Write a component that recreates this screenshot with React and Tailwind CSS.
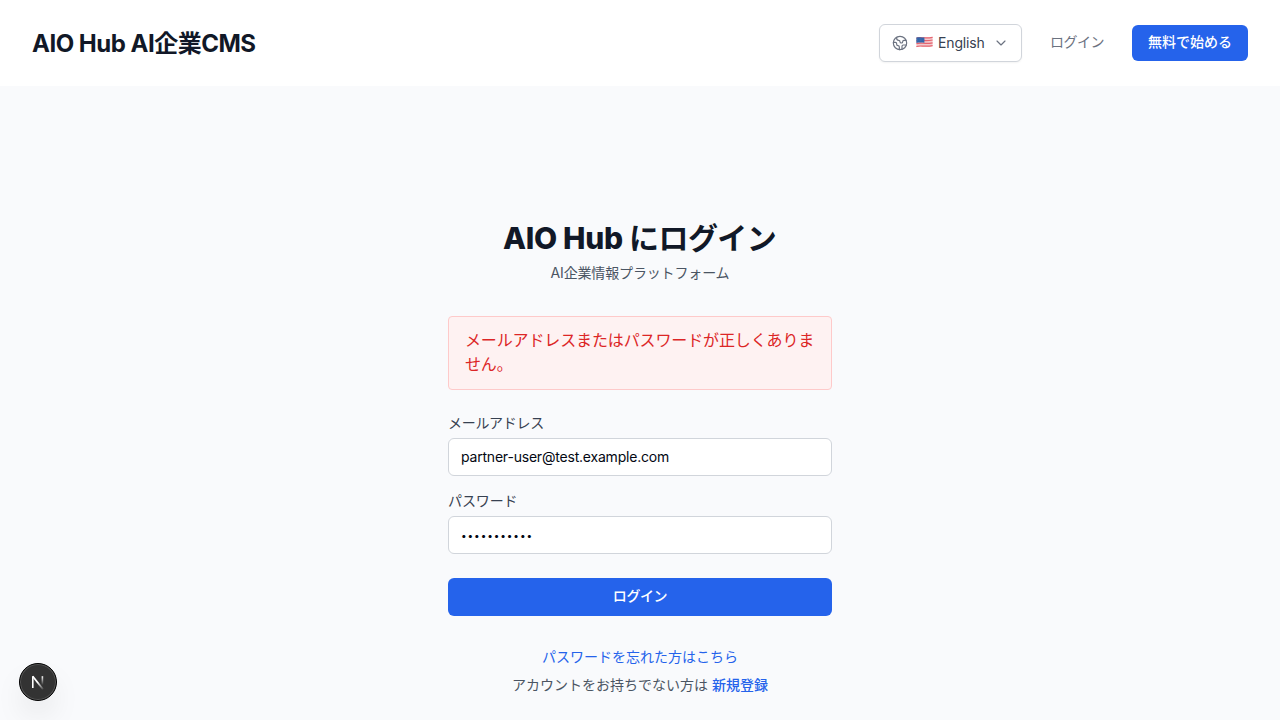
import React from 'react';
import { ChevronDown, Earth } from 'lucide-react';

function Flag() {
  return (
    <svg className="block h-3 w-[17px]" viewBox="0 0 17 12" aria-hidden="true">
      <path d="M.4 1.6C4 .2 9 2.2 16.6.7v9.3C11 12 7 9.6.4 11.2Z" fill="#f3c9cd" />
      <path d="M.4 2.2C4 .8 9 2.8 16.6 1.3M.4 4.9C4 3.5 9 5.5 16.6 4M.4 7.7C4 6.3 9 8.3 16.6 6.8M.4 10.5C4 9.1 9 11.1 16.6 9.6" fill="none" stroke="#e5646f" strokeWidth="1.2" />
      <path d="M.4 1.6C3 .7 6 1.4 8.4 1.6v5.2C6 6.6 3 6.2.4 7Z" fill="#2f62a8" />
      <path d="M1.4 3h6M1.4 4.8h6" stroke="#6f93c6" strokeWidth=".5" strokeDasharray=".6 .8" />
    </svg>
  );
}

function Header() {
  return (
    <header className="flex h-[86px] shrink-0 items-center justify-between bg-white px-8">
      <div className="pt-0.5 text-2xl font-bold tracking-[-0.5px] text-[#111827]">AIO Hub AI企業CMS</div>
      <div className="flex items-center">
        <button className="flex h-[38px] w-[143px] items-center rounded-md border border-[#d1d5db] bg-white px-3 text-sm text-[#374151] shadow-xs">
          <Earth className="mr-2 size-4 text-[#6b7280]" strokeWidth={1.75} />
          <span className="mr-[5px] flex pb-0.5"><Flag /></span>
          <span className="tracking-[-0.15px]">English</span>
          <ChevronDown className="ml-2 size-4 text-[#6b7280]" strokeWidth={1.75} />
        </button>
        <a className="ml-7 w-[54px] whitespace-nowrap pb-0.5 text-sm tracking-[-0.5px] text-[#6b7280]">ログイン</a>
        <button className="ml-7 h-9 w-[116px] rounded-md bg-[#2563eb] pb-0.5 text-sm font-medium text-white">無料で始める</button>
      </div>
    </header>
  );
}

function DevBadge() {
  return (
    <div className="fixed bottom-[19px] left-[19px] flex size-[38px] items-center justify-center rounded-full border border-black bg-[#333333] shadow-[inset_0_0_0_1px_#555555,0_16px_32px_-8px_rgba(0,0,0,0.18)]">
      <svg className="size-4" viewBox="0 0 16 16" fill="none">
        <defs>
          <linearGradient id="stem" x1="0" y1="2" x2="0" y2="11" gradientUnits="userSpaceOnUse">
            <stop stopColor="#fff" />
            <stop offset="1" stopColor="#fff" stopOpacity="0" />
          </linearGradient>
          <linearGradient id="diagonal" x1="8" y1="8" x2="13.5" y2="15" gradientUnits="userSpaceOnUse">
            <stop stopColor="#fff" />
            <stop offset="1" stopColor="#fff" stopOpacity="0.1" />
          </linearGradient>
        </defs>
        <path d="M2.8 14V2.2" stroke="#fff" strokeWidth="1.6" />
        <path d="M2.7 2.3 13 15.2" stroke="url(#diagonal)" strokeWidth="1.8" />
        <path d="M12.4 2.2V11" stroke="url(#stem)" strokeWidth="1.6" />
      </svg>
    </div>
  );
}

const fieldClass =
  'mt-1 block h-[38px] w-full rounded-md border border-[#d1d5db] bg-white px-3 text-[#030712] outline-none';
const labelClass = 'block h-5 text-sm leading-[18px] text-[#374151]';

export default function App() {
  return (
    <div className="flex h-screen flex-col overflow-hidden bg-[#f9fafc] font-['Inter','Noto_Sans_CJK_JP',sans-serif]" lang="ja">
      <Header />
      <main className="mx-auto w-96 pt-[134px]">
        <h1 className="whitespace-nowrap pr-px text-center text-3xl leading-9 font-extrabold tracking-[-0.3px] text-[#111827]">
          AIO Hub <span className="font-bold tracking-[-0.6px]">にログイン</span>
        </h1>
        <p className="mt-2 h-5 text-center text-sm leading-[18px] tracking-[-0.15px] text-[#4b5563]">AI企業情報プラットフォーム</p>
        <div className="mt-8 rounded-sm border border-[#fecaca] bg-[#fef2f2] px-4 pt-[11px] pb-[13px] text-base tracking-[-0.13px] text-[#dc2626]">
          メールアドレスまたはパスワードが正しくありません。
        </div>
        <form className="mt-6">
          <label className={`${labelClass} tracking-[-0.3px]`} htmlFor="email">メールアドレス</label>
          <input id="email" type="email" className={`${fieldClass} pb-0.5 text-sm tracking-[-0.2px]`} defaultValue="partner-user@test.example.com" />
          <label className={`mt-4 ${labelClass} tracking-[-0.1px]`} htmlFor="password">パスワード</label>
          <input id="password" type="password" className={`${fieldClass} text-[10px] tracking-[0.92px]`} defaultValue="password123" />
          <button type="button" className="mt-6 block h-[38px] w-full rounded-md bg-[#2563eb] pb-0.5 text-sm font-medium tracking-[-0.4px] text-white">ログイン</button>
        </form>
        <div className="mt-8 space-y-2 text-center text-sm leading-[18px] text-[#4b5563]">
          <p className="h-5"><a className="text-[#2563eb]">パスワードを忘れた方はこちら</a></p>
          <p className="h-5">アカウントをお持ちでない方は <a className="font-medium text-[#2563eb]">新規登録</a></p>
        </div>
      </main>
      <DevBadge />
    </div>
  );
}
